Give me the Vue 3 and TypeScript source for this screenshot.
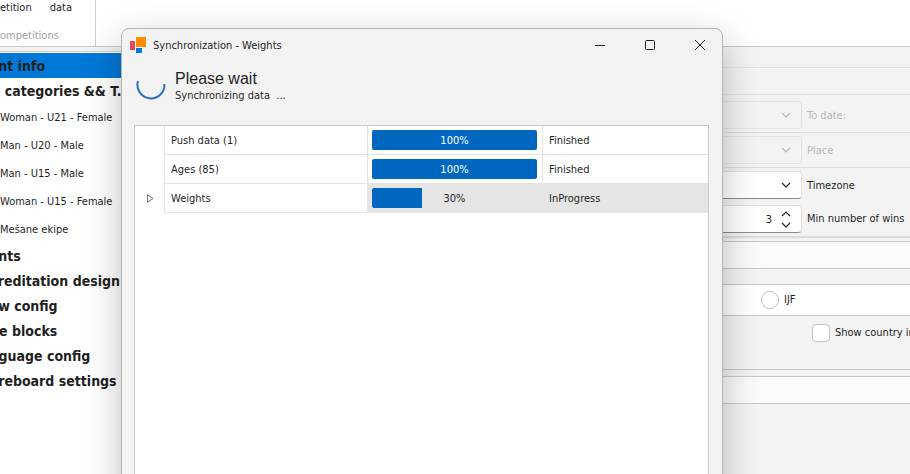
<script setup lang="ts">
import { ref } from 'vue'

interface NavItem {
  label: string
  level: 'section' | 'category'
}

interface SyncTask {
  name: string
  percent: number
  status: string
  current: boolean
}

const navItems: NavItem[] = [
  { label: 'Event info', level: 'section' },
  { label: 'Age categories && T..', level: 'section' },
  { label: 'Woman - U21 - Female', level: 'category' },
  { label: 'Man - U20 - Male', level: 'category' },
  { label: 'Man - U15 - Male', level: 'category' },
  { label: 'Woman - U15 - Female', level: 'category' },
  { label: 'Mešane ekipe', level: 'category' },
  { label: 'Events', level: 'section' },
  { label: 'Accreditation design', level: 'section' },
  { label: 'Draw config', level: 'section' },
  { label: 'Time blocks', level: 'section' },
  { label: 'Language config', level: 'section' },
  { label: 'Scoreboard settings', level: 'section' },
]

const tasks: SyncTask[] = [
  { name: 'Push data (1)', percent: 100, status: 'Finished', current: false },
  { name: 'Ages (85)', percent: 100, status: 'Finished', current: false },
  { name: 'Weights', percent: 30, status: 'InProgress', current: true },
]

const active = ref(0)
const minWins = ref(3)
const ijf = ref('')
const showCountry = ref(false)
</script>

<template>
  <div class="app">
    <header class="ribbon">
      <div class="group">
        <div class="commands">
          <button type="button">etition</button>
          <button type="button">data</button>
        </div>
        <span class="caption">ompetitions</span>
      </div>
    </header>

    <div class="body">
      <nav class="sidebar">
        <a
          v-for="(item, i) in navItems"
          :key="item.label"
          href="#"
          :class="[item.level, { selected: i === active }]"
          @click.prevent="active = i"
        >{{ item.label }}</a>
      </nav>

      <main class="details">
        <div class="strip"></div>
        <div class="strip tall"></div>
        <div class="field first disabled">
          <div class="box">
            <select id="to-date" disabled></select>
            <svg class="chevron" viewBox="0 0 10 6"><path d="M1 1l4 4 4-4" /></svg>
          </div>
          <label for="to-date">To date:</label>
        </div>
        <div class="field disabled">
          <div class="box">
            <select id="place" disabled></select>
            <svg class="chevron" viewBox="0 0 10 6"><path d="M1 1l4 4 4-4" /></svg>
          </div>
          <label for="place">Place</label>
        </div>
        <div class="field open">
          <div class="box">
            <select id="timezone"></select>
            <svg class="chevron" viewBox="0 0 10 6"><path d="M1 1l4 4 4-4" /></svg>
          </div>
          <label for="timezone">Timezone</label>
        </div>
        <div class="field last">
          <div class="box">
            <input id="wins" v-model.number="minWins" type="text" inputmode="numeric" />
            <span class="spin">
              <button type="button" aria-label="Increase" @click="minWins++">
                <svg class="chevron" viewBox="0 0 10 6"><path d="M1 5l4-4 4 4" /></svg>
              </button>
              <button type="button" aria-label="Decrease" @click="minWins--">
                <svg class="chevron" viewBox="0 0 10 6"><path d="M1 1l4 4 4-4" /></svg>
              </button>
            </span>
          </div>
          <label for="wins">Min number of wins</label>
        </div>
        <div class="section-head"></div>
        <div class="choices">
          <label><input v-model="ijf" type="radio" name="rules" value="ijf" />IJF</label>
        </div>
        <div class="flags">
          <label><input v-model="showCountry" type="checkbox" />Show country in</label>
        </div>
        <div class="section-head lower"></div>
      </main>
    </div>

    <section class="dialog" role="dialog" aria-labelledby="dialog-title">
      <div class="titlebar">
        <svg class="logo" viewBox="0 0 16 16">
          <path d="M0 4h5v9H0z" fill="#e74856" />
          <path d="M6 0h10v10H6z" fill="#ff8c00" />
          <path d="M6 11h6v5H6z" fill="#0078d7" />
        </svg>
        <h1 id="dialog-title">Synchronization - Weights</h1>
        <div class="window-buttons">
          <button type="button" aria-label="Minimize">
            <svg viewBox="0 0 12 12"><path d="M1 6.5h10" /></svg>
          </button>
          <button type="button" aria-label="Maximize">
            <svg viewBox="0 0 12 12"><rect x="1.5" y="1.5" width="9" height="9" rx="1" /></svg>
          </button>
          <button type="button" aria-label="Close">
            <svg viewBox="0 0 12 12"><path d="M1 1l10 10M11 1L1 11" /></svg>
          </button>
        </div>
      </div>

      <div class="wait">
        <svg class="spinner" viewBox="0 0 30 30">
          <path d="M2 9A13.5 13.5 0 1 0 28.4 12" />
        </svg>
        <div>
          <p class="headline">Please wait</p>
          <p class="detail">Synchronizing data&nbsp; ...</p>
        </div>
      </div>

      <div class="grid">
        <table>
          <colgroup>
            <col class="c-expand" />
            <col class="c-name" />
            <col class="c-progress" />
            <col />
          </colgroup>
          <tbody>
            <tr v-for="task in tasks" :key="task.name" :class="{ current: task.current }">
              <td class="expand">
                <button v-if="task.current" type="button" aria-label="Expand">
                  <svg viewBox="0 0 7 9"><path d="M.5.8v7.4L6 4.5z" /></svg>
                </button>
              </td>
              <td>{{ task.name }}</td>
              <td class="progress">
                <div class="bar" :class="{ full: task.percent === 100 }">
                  <div class="fill" :style="{ width: task.percent + '%' }"></div>
                  <span>{{ task.percent }}%</span>
                </div>
              </td>
              <td>{{ task.status }}</td>
            </tr>
          </tbody>
        </table>
      </div>
    </section>
  </div>
</template>

<style>
body {
  background: #f3f3f3;
}
</style>

<style scoped>
.app {
  position: relative;
  display: flex;
  flex-direction: column;
  height: 100vh;
  overflow: hidden;
  background: #f3f3f3;
  color: #1f1f1f;
  font: 11px/16px "DejaVu Sans Condensed", "Noto Sans", sans-serif;
}
*,
*::before {
  box-sizing: border-box;
}
button,
input,
select {
  font: inherit;
  color: inherit;
  margin: 0;
  padding: 0;
  border: 0;
  background: none;
}
svg {
  display: block;
  fill: none;
  stroke: currentColor;
}

.ribbon {
  display: flex;
  flex: none;
  height: 47px;
  background: #fff;
  border-bottom: 1px solid #c8c8c8;
}
.group {
  display: flex;
  flex-direction: column;
  justify-content: space-between;
  width: 96px;
  padding-bottom: 2px;
  border-right: 1px solid #d0d0d0;
}
.commands {
  display: flex;
  gap: 18px;
}
.caption {
  color: #a0a0a0;
}

.body {
  display: flex;
  flex: 1;
  min-height: 0;
}
.sidebar {
  width: 160px;
  margin-top: 4px;
  margin-left: -27px;
  padding-top: 1px;
  background: #fff;
  border-top: 1px solid #d0d0d0;
  overflow: hidden;
  white-space: nowrap;
}
.sidebar a {
  display: block;
  color: inherit;
  text-decoration: none;
}
.section {
  height: 25px;
  line-height: 27px;
  font-size: 14px;
  font-weight: bold;
}
.sidebar .category {
  height: 28px;
  padding-left: 27px;
  line-height: 30px;
}
.sidebar .selected {
  background: #0078d7;
}

.details {
  flex: 1;
}
.strip {
  height: 21px;
  border-bottom: 1px solid #e2e2e2;
}
.strip.tall {
  height: 27px;
}
.field {
  display: grid;
  grid-template-columns: 1fr 103px;
  gap: 5px;
  align-items: center;
  height: 35px;
  padding: 3px 0;
  border-bottom: 1px solid #dedede;
  white-space: nowrap;
}
.field label {
  padding-top: 2px;
}
.field.first {
  height: 38px;
  padding-top: 6px;
}
.field.open {
  border-bottom-color: transparent;
}
.field.last {
  padding: 2px 0 4px;
  border-bottom: 2px solid #dcdcdc;
}
.field.last label {
  padding-top: 0;
}
.field.disabled {
  color: #b8b8b8;
}
.box {
  display: flex;
  align-items: center;
  position: relative;
  height: 28px;
  background: #fff;
  border: 1px solid #e2e2e2;
  border-bottom-color: #8a8a8a;
  border-radius: 4px;
}
.disabled .box {
  background: #f3f3f3;
  border-color: #e2e2e2;
}
.box select,
.box input {
  flex: 1;
  width: 100%;
  height: 100%;
  appearance: none;
}
.box input {
  padding-right: 9px;
  text-align: right;
}
.chevron {
  width: 10px;
  height: 6px;
  stroke-width: 1.2;
}
.box > .chevron {
  position: absolute;
  right: 10px;
  pointer-events: none;
}
.spin {
  display: flex;
  flex-direction: column;
  gap: 5px;
  padding-right: 10px;
}
.section-head {
  height: 28px;
  margin-top: 3px;
  background: #fafafa;
  border: solid #c8c8c8;
  border-width: 1px 0;
}
.choices {
  display: flex;
  justify-content: flex-end;
  height: 32px;
  margin-top: 15px;
  background: #fff;
  border: solid #c8c8c8;
  border-width: 1px 0;
}
.choices label,
.flags label {
  display: flex;
  align-items: center;
  gap: 5px;
  white-space: nowrap;
}
.choices label {
  width: 149px;
}
.choices input,
.flags input {
  flex: none;
  appearance: none;
  width: 18px;
  height: 18px;
  background: #fff;
  border: 1px solid #c4c4c4;
  border-radius: 4px;
}
.choices input {
  border-radius: 50%;
}
.choices input:checked,
.flags input:checked {
  background: #0067c0;
}
.flags {
  display: flex;
  justify-content: flex-end;
  height: 54px;
  padding: 8px 0 27px;
  border-bottom: 1px solid #c8c8c8;
}
.flags label {
  width: 98px;
}
.section-head.lower {
  margin-top: 6px;
}

.dialog {
  position: absolute;
  top: 28px;
  right: 187px;
  bottom: -40px;
  left: 121px;
  display: flex;
  flex-direction: column;
  background: #f3f3f3;
  border: 1px solid #b4b4b4;
  border-radius: 8px;
  box-shadow: 0 12px 36px rgba(0, 0, 0, 0.26);
}
.titlebar {
  display: flex;
  align-items: center;
  height: 32px;
  padding-left: 8px;
}
.logo {
  width: 16px;
  height: 16px;
  stroke: none;
}
h1 {
  margin: 0 auto 0 7px;
  padding-top: 2px;
  font: inherit;
}
.window-buttons {
  display: flex;
  gap: 6px;
}
.window-buttons button {
  display: grid;
  place-items: center;
  width: 44px;
  height: 32px;
}
.window-buttons svg {
  width: 12px;
  height: 12px;
}
.wait {
  display: flex;
  align-items: center;
  gap: 9px;
  padding: 9px 14px 0;
}
.spinner {
  width: 30px;
  height: 30px;
  stroke: #2b6cc4;
  stroke-width: 2;
}
.wait p {
  margin: 0;
}
.headline {
  font: 16px/18px "Liberation Sans", sans-serif;
}
.grid {
  flex: 1;
  margin: 21px 13px 0 12px;
  background: #fff;
  border: 1px solid #c8c8c8;
}
table {
  width: 100%;
  table-layout: fixed;
  border-collapse: separate;
  border-spacing: 0;
}
.c-expand {
  width: 29px;
}
.c-name {
  width: 203px;
}
.c-progress {
  width: 175px;
}
td {
  height: 29px;
  padding: 2px 6px 0;
  border-bottom: 1px solid #e2e2e2;
  border-left: 1px solid #e2e2e2;
}
.expand {
  padding: 0 0 0 11px;
  border-color: transparent;
}
.expand button {
  display: block;
}
.expand svg {
  width: 7px;
  height: 9px;
  stroke: #707070;
}
td.progress {
  padding: 0 5px 0 4px;
}
.current td:nth-child(n + 3) {
  background: #e5e5e5;
  border-color: #e5e5e5;
}
.bar {
  display: grid;
  align-items: center;
  height: 20px;
  border-radius: 2px;
  overflow: hidden;
}
.bar > * {
  grid-area: 1 / 1;
}
.fill {
  height: 20px;
  background: #0067c0;
}
.bar span {
  padding-top: 2px;
  text-align: center;
}
.bar.full span {
  color: #fff;
}
</style>
